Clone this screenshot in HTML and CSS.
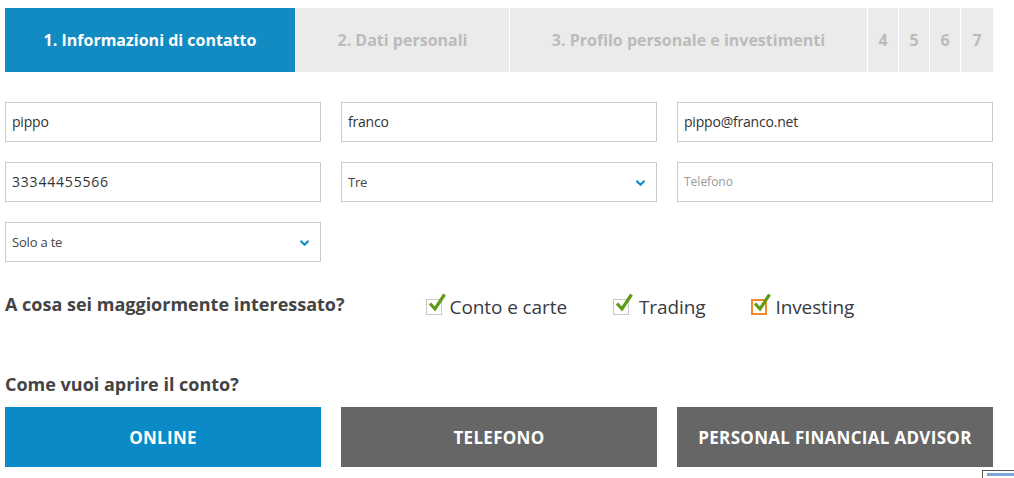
FILE: index.html
```html
<!DOCTYPE html>
<html lang="it">
<head>
<meta charset="utf-8">
<title>Apri il conto</title>
<link rel="stylesheet" href="styles.css">
</head>
<body>
<div class="page">
  <nav class="steps">
    <div class="step step-active step-1">1. Informazioni di contatto</div>
    <div class="step step-2">2. Dati personali</div>
    <div class="step step-3">3. Profilo personale e investimenti</div>
    <div class="step step-n">4</div>
    <div class="step step-n">5</div>
    <div class="step step-n">6</div>
    <div class="step step-n step-last">7</div>
  </nav>

  <div class="fields">
    <div class="field"><span class="value">pippo</span></div>
    <div class="field"><span class="value">franco</span></div>
    <div class="field"><span class="value">pippo@franco.net</span></div>
    <div class="field"><span class="value digits">33344455566</span></div>
    <div class="field select"><span class="value small">Tre</span>
      <svg class="chev" width="9" height="6" viewBox="0 0 9 6"><path d="M0.5 0.8 L4.5 4.8 L8.5 0.8" fill="none" stroke="#0a8ac6" stroke-width="2"/></svg>
    </div>
    <div class="field"><span class="placeholder">Telefono</span></div>
    <div class="field select"><span class="value small">Solo a te</span>
      <svg class="chev" width="9" height="6" viewBox="0 0 9 6"><path d="M0.5 0.8 L4.5 4.8 L8.5 0.8" fill="none" stroke="#0a8ac6" stroke-width="2"/></svg>
    </div>
  </div>

  <div class="interest">
    <h2 class="question">A cosa sei maggiormente interessato?</h2>
    <div class="checks">
      <label class="check check-1"><span class="box"><svg class="tick" width="20" height="20" viewBox="0 0 20 20"><path d="M3 10.5 L8 16 L17.5 1.5" fill="none" stroke="#5e9c17" stroke-width="3.2"/></svg></span>Conto e carte</label>
      <label class="check check-2"><span class="box"><svg class="tick" width="20" height="20" viewBox="0 0 20 20"><path d="M3 10.5 L8 16 L17.5 1.5" fill="none" stroke="#5e9c17" stroke-width="3.2"/></svg></span>Trading</label>
      <label class="check check-3"><span class="box box-focus"><svg class="tick" width="20" height="20" viewBox="0 0 20 20"><path d="M3 10.5 L8 16 L17.5 1.5" fill="none" stroke="#5e9c17" stroke-width="3.2"/></svg></span>Investing</label>
    </div>
  </div>

  <h2 class="question how">Come vuoi aprire il conto?</h2>
  <div class="buttons">
    <div class="btn btn-blue">ONLINE</div>
    <div class="btn btn-gray">TELEFONO</div>
    <div class="btn btn-gray">PERSONAL FINANCIAL ADVISOR</div>
  </div>
</div>
<div class="corner"><span class="corner-bar"></span></div>
</body>
</html>
```

FILE: styles.css
```css
html, body {
  margin: 0;
  padding: 0;
  background: #fff;
  overflow: hidden;
}
body {
  font-family: "Open Sans", "Liberation Sans", Arial, sans-serif;
  color: #333;
}
.page {
  width: 988px;
  padding: 8px 0 0 5px;
}
.steps {
  display: flex;
  height: 64px;
  background: #ebebeb;
}
.step {
  display: flex;
  align-items: center;
  justify-content: center;
  font-size: 16px;
  font-weight: 700;
  color: #bbbbbb;
  border-right: 1px solid #fff;
}
.step-1 { width: 290px; }
.step-2 { width: 213px; }
.step-3 { width: 357px; }
.step-n { width: 30px; }
.step-last { border-right: none; width: 32px; }
.step-active {
  background: #118bc2;
  color: #fff;
}
.fields {
  display: grid;
  grid-template-columns: 316px 316px 316px;
  column-gap: 20px;
  row-gap: 20px;
  margin-top: 30px;
}
.field {
  height: 40px;
  box-sizing: border-box;
  border: 1px solid #cccccc;
  display: flex;
  align-items: center;
  justify-content: space-between;
  padding: 0 11px 1px 6px;
}
.value {
  font-size: 14px;
  color: #333;
  letter-spacing: -0.2px;
}
.value.digits { letter-spacing: 0.8px; }
.value.small { font-size: 13px; color: #444; }
.placeholder {
  font-size: 12px;
  color: #999;
}
.chev { display: block; margin-top: 2px; }
.interest {
  display: flex;
  align-items: center;
  margin-top: 30px;
  height: 24px;
}
.question {
  margin: 0;
  font-size: 18px;
  font-weight: 700;
  color: #444;
  letter-spacing: 0;
}
.checks {
  display: flex;
  margin-left: 81px;
  margin-top: 6px;
}
.check {
  display: flex;
  align-items: center;
  font-size: 19px;
  color: #3a3a44;
  letter-spacing: -0.1px;
}
.check-1 { margin-right: 46px; }
.check-2 { margin-right: 46px; }
.box {
  position: relative;
  width: 16px;
  height: 16px;
  box-sizing: border-box;
  border: 1px solid #c8c8c8;
  margin-right: 8px;
}
.check-2 .box { margin-right: 10px; }
.box-focus {
  border: 2px solid #f58a2a;
  margin-right: 8px;
}
.tick {
  position: absolute;
  left: 0;
  top: -7px;
}
.box-focus .tick { left: -1px; top: -8px; }
.how {
  margin-top: 56px;
}
.buttons {
  display: grid;
  grid-template-columns: 316px 316px 316px;
  column-gap: 20px;
  margin-top: 11px;
}
.btn {
  height: 60px;
  display: flex;
  align-items: center;
  justify-content: center;
  color: #fff;
  font-size: 17px;
  font-weight: 700;
  letter-spacing: 0.3px;
}
.btn-blue { background: #0a8ac6; }
.btn-gray { background: #666666; }
.corner {
  position: absolute;
  left: 982px;
  top: 470px;
  width: 40px;
  height: 20px;
  box-sizing: border-box;
  border: 1px solid #555;
  background: #fff;
}
.corner-bar {
  position: absolute;
  left: 4px;
  top: 2px;
  width: 40px;
  height: 3px;
  background: #7aa7d8;
}
```
